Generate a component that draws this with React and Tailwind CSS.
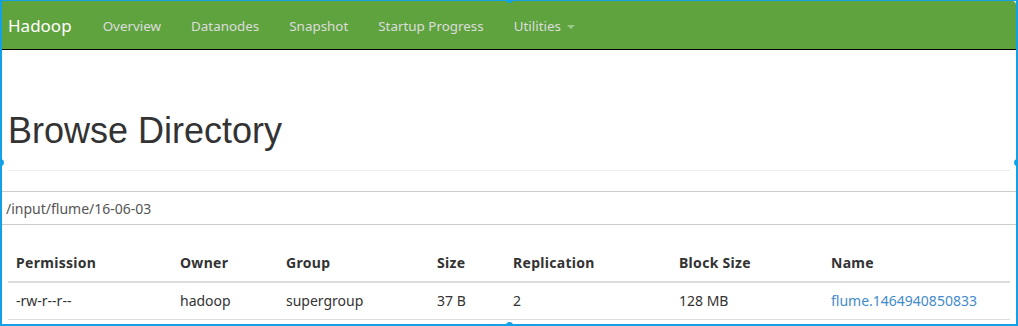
const navItems = ['Overview', 'Datanodes', 'Snapshot', 'Startup Progress'];

const columns = [
  { label: 'Permission', w: 'w-[164px]' },
  { label: 'Owner', w: 'w-[106px]' },
  { label: 'Group', w: 'w-[151px]' },
  { label: 'Size', w: 'w-[76px]' },
  { label: 'Replication', w: 'w-[166px]' },
  { label: 'Block Size', w: 'w-[152px]' },
  { label: 'Name', w: '' },
];

const rows = [
  ['-rw-r--r--', 'hadoop', 'supergroup', '37 B', '2', '128 MB', 'flume.1464940850833'],
];

function Handle({ className }) {
  return <div className={`absolute w-[7px] h-[7px] rounded-full bg-[#12a0e6] ${className}`} />;
}

export default function App() {
  return (
    <div className="relative w-[1018px] h-[326px] overflow-hidden bg-white border-[#12a0e6] border-t border-l-2 border-r-2 border-b-2 font-['Noto_Sans','Open_Sans',sans-serif] text-[#333]">
      {/* Navbar */}
      <nav className="h-[49px] pt-[2px] bg-[#5fa33e] border-b border-black rounded-tr-[4px] flex items-center">
        <span className="pl-[6px] pr-[31px] text-[17px] text-white">Hadoop</span>
        <ul className="flex items-center text-[13.4px] text-[#dddddd]">
          {navItems.map((item) => (
            <li key={item} className="pr-[30px]">{item}</li>
          ))}
          <li className="flex items-center">
            Utilities
            <span className="ml-[6px] mt-[2px] w-0 h-0 border-l-4 border-r-4 border-t-4 border-l-transparent border-r-transparent border-t-[#9bc98a]" />
          </li>
        </ul>
      </nav>

      {/* Page header */}
      <div className="mx-[6px] mt-[61px] pb-[19px] border-b border-[#eeeeee]">
        <h1 className="text-[36px] leading-[40px] font-['Liberation_Sans',Arial,sans-serif] text-[#333]">Browse Directory</h1>
      </div>

      {/* Path */}
      <div className="mt-[20px] h-[34px] border-t border-b border-[#cccccc] flex items-center pl-[4px] text-[14px] text-[#555]">
        /input/flume/16-06-03
      </div>

      {/* Listing */}
      <table className="mt-[20px] ml-[6px] w-[1002px] table-fixed border-collapse text-[14px]">
        <thead>
          <tr>
            {columns.map((c) => (
              <th key={c.label} className={`${c.w} text-left font-bold px-[8px] py-[8px] leading-[20px] border-b-2 border-[#dddddd] tracking-[0.3px]`}>
                {c.label}
              </th>
            ))}
          </tr>
        </thead>
        <tbody>
          {rows.map((r) => (
            <tr key={r[6]}>
              {r.map((cell, i) => (
                <td key={i} className="px-[8px] py-[8px] leading-[20px] border-b border-[#dddddd]">
                  {i === 6 ? <span className="text-[#428bca]">{cell}</span> : cell}
                </td>
              ))}
            </tr>
          ))}
        </tbody>
      </table>

      {/* selection handles */}
      <Handle className="left-[-5px] top-[158px]" />
      <Handle className="right-[-5px] top-[158px]" />
      <Handle className="left-[504px] top-[-5px]" />
      <Handle className="left-[504px] bottom-[-5px]" />
    </div>
  );
}
